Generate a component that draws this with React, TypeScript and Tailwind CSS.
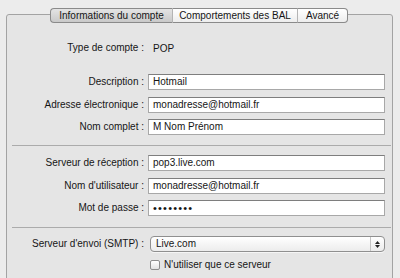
import React from 'react'

const FONT = '"Liberation Sans", Arial, sans-serif'

const TABS = [
  { label: 'Informations du compte', w: 'w-[123px]', active: true },
  { label: 'Comportements des BAL', w: 'w-[125px]', active: false },
  { label: 'Avancé', w: 'w-[50px]', active: false }
]

export default function App(): React.JSX.Element {
  return (
    <div
      className="w-[400px] h-[278px] overflow-hidden bg-[#ececec] text-[10px] text-[#151515] pt-[8px]"
      style={{ fontFamily: FONT }}
    >
      {/* Tabs sit over the box's top border */}
      <div className="relative z-10 flex ml-[50px] h-[15px]">
        {TABS.map((t, i) => (
          <div
            key={t.label}
            className={`${t.w} h-[15px] flex items-center justify-center border-y border-[#8a8a8a] leading-none ${
              i === 0 ? 'border-l rounded-l-[4px]' : ''
            } ${i === TABS.length - 1 ? 'border-r rounded-r-[4px]' : 'border-r border-r-[#b4b4b4]'} ${
              t.active
                ? 'bg-gradient-to-b from-[#e4e4e4] to-[#c9c9c9]'
                : 'bg-gradient-to-b from-[#ffffff] to-[#ededed]'
            }`}
          >
            {t.label}
          </div>
        ))}
      </div>

      {/* Group box */}
      <div className="-mt-[9px] ml-[6px] w-[387px] h-[280px] border border-[#a3a3a3] rounded-t-[3px] bg-[#e5e5e5] pt-[25px]">
        <div className="flex items-center h-[16px]">
          <Label>Type de compte :</Label>
          <span className="ml-[9px]">POP</span>
        </div>

        <Field className="mt-[18px]" label="Description :" value="Hotmail" />
        <Field className="mt-[7px]" label="Adresse électronique :" value="monadresse@hotmail.fr" />
        <Field className="mt-[6px]" label="Nom complet :" value="M Nom Prénom" />

        <Separator className="mt-[10px]" />

        <Field className="mt-[9px]" label="Serveur de réception :" value="pop3.live.com" />
        <Field className="mt-[7px]" label="Nom d'utilisateur :" value="monadresse@hotmail.fr" />
        <Field className="mt-[6px]" label="Mot de passe :" value="••••••••" password />

        <Separator className="mt-[11px]" />

        {/* SMTP popup */}
        <div className="flex items-center mt-[8px] h-[16px]">
          <Label>Serveur d'envoi (SMTP) :</Label>
          <div className="ml-[6px] w-[235px] h-[16px] flex items-stretch rounded-[4px] border border-[#8f8f8f] bg-gradient-to-b from-[#ffffff] to-[#ececec] shadow-[0_1px_0_rgba(255,255,255,0.6)]">
            <span className="flex-1 flex items-center pl-[5px] leading-none">Live.com</span>
            <span className="w-[14px] border-l border-[#c4c4c4] flex flex-col items-center justify-center gap-[1px]">
              <svg width="5" height="3" viewBox="0 0 5 3"><path d="M2.5 0L5 3H0z" fill="#222" /></svg>
              <svg width="5" height="3" viewBox="0 0 5 3"><path d="M0 0h5L2.5 3z" fill="#222" /></svg>
            </span>
          </div>
        </div>

        {/* Checkbox */}
        <div className="flex items-center mt-[6px] h-[13px] ml-[143px]">
          <span className="w-[10px] h-[10px] rounded-[2px] border border-[#8d8d8d] bg-gradient-to-b from-[#ffffff] to-[#e2e2e2]" />
          <span className="ml-[4px] leading-none">N'utiliser que ce serveur</span>
        </div>
      </div>
    </div>
  )
}

function Label({ children }: { children: React.ReactNode }): React.JSX.Element {
  return <span className="w-[137px] shrink-0 text-right whitespace-nowrap leading-none">{children}</span>
}

function Field({
  label,
  value,
  className = '',
  password = false
}: {
  label: string
  value: string
  className?: string
  password?: boolean
}): React.JSX.Element {
  return (
    <div className={`flex items-center h-[16px] ${className}`}>
      <Label>{label}</Label>
      <div className="ml-[4px] w-[237px] h-[16px] flex items-center bg-white border border-[#a8a8a8] border-t-[#7e7e7e] pl-[4px]">
        <span className={`leading-none ${password ? 'text-[11px] tracking-[1.2px]' : ''}`}>{value}</span>
      </div>
    </div>
  )
}

function Separator({ className = '' }: { className?: string }): React.JSX.Element {
  return (
    <div className={`ml-[5px] mr-[1px] ${className}`}>
      <div className="h-px bg-[#ababab]" />
    </div>
  )
}
